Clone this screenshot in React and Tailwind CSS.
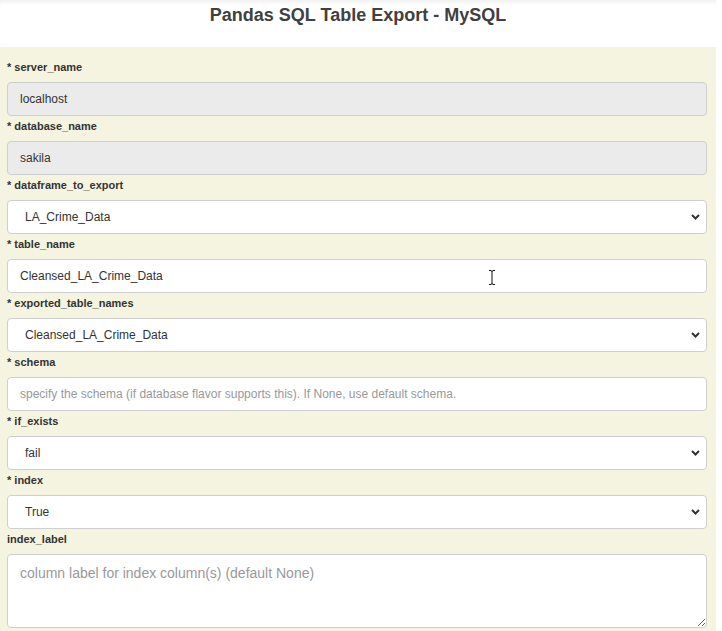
import React from 'react'

const fields = [
  { name: 'server_name', req: true, kind: 'input', value: 'localhost', disabled: true },
  { name: 'database_name', req: true, kind: 'input', value: 'sakila', disabled: true },
  { name: 'dataframe_to_export', req: true, kind: 'select', value: 'LA_Crime_Data' },
  { name: 'table_name', req: true, kind: 'input', value: 'Cleansed_LA_Crime_Data', cursor: true },
  { name: 'exported_table_names', req: true, kind: 'select', value: 'Cleansed_LA_Crime_Data' },
  { name: 'schema', req: true, kind: 'input', placeholder: 'specify the schema (if database flavor supports this). If None, use default schema.' },
  { name: 'if_exists', req: true, kind: 'select', value: 'fail' },
  { name: 'index', req: true, kind: 'select', value: 'True' },
]

const Chevron = () => (
  <svg className="pointer-events-none absolute right-[7px] top-[14px]" width="9" height="6" viewBox="0 0 9 6">
    <path d="M1 1 L4.5 4.5 L8 1" fill="none" stroke="#333" strokeWidth="2" />
  </svg>
)

const Field = ({ f }) => {
  const base = "block w-full h-[34px] rounded-[4px] border border-[#cfcfcf] text-[12px] text-[#333] outline-none"
  return (
    <div className="pt-[2px]">
      <label className="block h-[16px] leading-[16px] text-[11px] font-bold text-[#333]">
        {f.req ? '* ' : ''}{f.name}
      </label>
      <div className="relative mt-[7px]">
        {f.kind === 'select' ? (
          <>
            <div className={`${base} bg-white pl-[17px] leading-[32px]`}>{f.value}</div>
            <Chevron />
          </>
        ) : (
          <input
            type="text"
            readOnly
            disabled={f.disabled}
            defaultValue={f.value}
            placeholder={f.placeholder}
            className={`${base} px-[12px] placeholder:text-[#999] ${f.disabled ? 'bg-[#ebebeb]' : 'bg-white'}`}
          />
        )}
        {f.cursor && (
          <svg className="absolute left-[481px] top-[11px]" width="8" height="15" viewBox="0 0 8 15">
            <path d="M1 0.5 H3 M5 0.5 H7 M4 1 V14 M1 14.5 H3 M5 14.5 H7 M3 1 H5 M3 14 H5" stroke="#111" strokeWidth="1" fill="none" />
          </svg>
        )}
      </div>
    </div>
  )
}

const App = () => {
  return (
    <div className="w-[722px] h-[631px] overflow-hidden bg-white" style={{ fontFamily: '"Liberation Sans", Arial, sans-serif' }}>
      <div className="w-[716px]">
        <div className="h-[47px] bg-white shadow-[inset_0_5px_5px_-3px_rgba(0,0,0,0.07)] pt-[5px] text-center">
          <h1 className="text-[18px] leading-[21px] font-bold text-[#404040]">Pandas SQL Table Export - MySQL</h1>
        </div>
        <div className="bg-[#f5f4e1] pl-[7px] pr-[9px] pt-[10px] pb-[10px]">
          {fields.map((f) => (
            <Field key={f.name} f={f} />
          ))}
          <div className="pt-[2px]">
            <label className="block h-[16px] leading-[16px] text-[11px] font-bold text-[#333]">index_label</label>
            <textarea
              placeholder="column label for index column(s) (default None)"
              className="mt-[7px] block w-full h-[74px] rounded-[4px] border border-[#cfcfcf] bg-white px-[12px] pt-[8px] text-[14px] text-[#333] outline-none placeholder:text-[#999]"
            />
          </div>
        </div>
      </div>
    </div>
  )
}

export default App
